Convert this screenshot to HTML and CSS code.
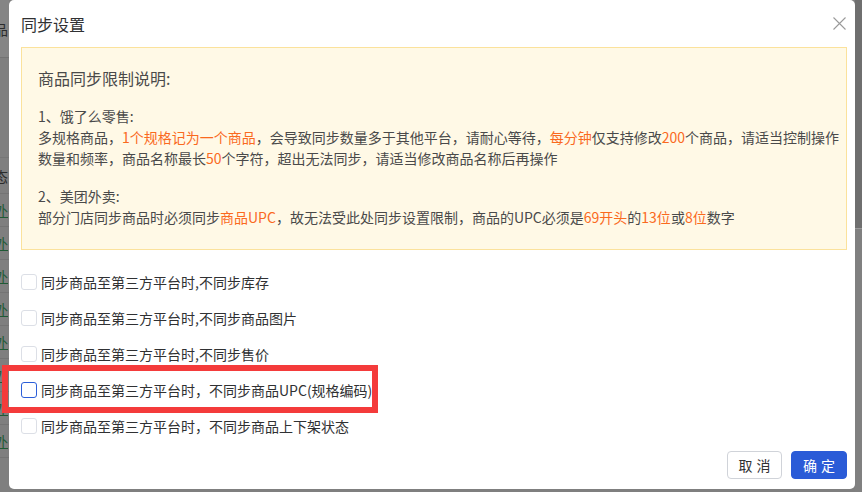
FILE: index.html
```html
<!DOCTYPE html>
<html lang="zh-CN">
<head>
<meta charset="utf-8">
<title>同步设置</title>
<link rel="stylesheet" href="styles.css">
</head>
<body>
<div class="page">
  <aside class="bg-strip bg-left">
    <div class="bg-row bg-head">品</div>
    <div class="bg-row bg-band"></div>
    <div class="bg-row bg-state">态</div>
    <div class="bg-row bg-link"><span>外</span></div>
    <div class="bg-row bg-link"><span>外</span></div>
    <div class="bg-row bg-link"><span>外</span></div>
    <div class="bg-row bg-link"><span>外</span></div>
    <div class="bg-row bg-link"><span>外</span></div>
    <div class="bg-row bg-link"><span>外</span></div>
    <div class="bg-row bg-link"><span>外</span></div>
    <div class="bg-row bg-link"><span>外</span></div>
  </aside>

  <section class="modal">
    <header class="modal-header">
      <h1 class="modal-title">同步设置</h1>
      <span class="modal-close" aria-label="关闭">
        <svg width="13" height="13" viewBox="0 0 13 13"><path d="M0.5 0.5 L12.5 12.5 M12.5 0.5 L0.5 12.5" stroke="#9a9a9a" stroke-width="1.1" fill="none"/></svg>
      </span>
    </header>

    <div class="notice">
      <div class="notice-title">商品同步限制说明:</div>
      <div class="notice-section">
        <div>1、饿了么零售:</div>
        <div>多规格商品，<em>1个规格记为一个商品</em>，会导致同步数量多于其他平台，请耐心等待，<em>每分钟</em>仅支持修改<em>200</em>个商品，请适当控制操作数量和频率，商品名称最长<em>50</em>个字符，超出无法同步，请适当修改商品名称后再操作</div>
      </div>
      <div class="notice-section second">
        <div>2、美团外卖:</div>
        <div>部分门店同步商品时必须同步<em>商品UPC</em>，故无法受此处同步设置限制，商品的UPC必须是<em>69开头</em>的<em>13位</em>或<em>8位</em>数字</div>
      </div>
    </div>

    <ul class="options">
      <li class="option"><span class="checkbox"></span><span>同步商品至第三方平台时,不同步库存</span></li>
      <li class="option"><span class="checkbox"></span><span>同步商品至第三方平台时,不同步商品图片</span></li>
      <li class="option"><span class="checkbox"></span><span>同步商品至第三方平台时,不同步售价</span></li>
      <li class="option"><span class="checkbox focused"></span><span>同步商品至第三方平台时，不同步商品UPC(规格编码)</span></li>
      <li class="option"><span class="checkbox"></span><span>同步商品至第三方平台时，不同步商品上下架状态</span></li>
    </ul>

    <footer class="modal-footer">
      <button class="btn btn-cancel">取消</button>
      <button class="btn btn-primary">确定</button>
    </footer>
  </section>

  <aside class="bg-strip bg-right">
    <div class="bg-right-top"></div>
    <div class="bg-right-line"></div>
  </aside>

  <div class="annotation"></div>
</div>
</body>
</html>
```

FILE: styles.css
```css
* { box-sizing: border-box; }
html, body { margin: 0; padding: 0; }
body {
  font-family: "Noto Sans CJK SC", "Noto Sans", sans-serif;
  background: #7f7f7f;
}
.page {
  position: relative;
  display: flex;
  width: 862px;
  height: 492px;
  overflow: hidden;
  background: #7f7f7f;
}

/* dimmed page behind the dialog */
.bg-strip { flex: none; overflow: hidden; }
.bg-left { width: 9px; display: flex; flex-direction: column; }
.bg-row {
  font-size: 14px;
  line-height: 32px;
  height: 32px;
  white-space: nowrap;
  margin-left: -6px;
  color: #2b2b2b;
  border-bottom: 1px solid #747474;
}
.bg-head { height: 58px; line-height: 58px; background: #858585; border-bottom: 1px solid #737373; }
.bg-band { height: 100px; border-bottom: 1px solid #767676; }
.bg-state { height: 36px; line-height: 36px; }
.bg-link { height: 33px; line-height: 33px; }
.bg-link span { color: #1f5a35; text-decoration: underline; }

.bg-right { flex: 1; display: flex; flex-direction: column; background: #808080; }
.bg-right-top { height: 228px; background: #6f6f6f; }
.bg-right-line { height: 1px; background: #9a9a9a; }

/* dialog */
.modal {
  flex: none;
  width: 846px;
  height: 489px;
  background: #fff;
  border-radius: 5px;
  padding: 12px 8px 0 12px;
  display: flex;
  flex-direction: column;
}
.modal-header {
  display: flex;
  justify-content: space-between;
  align-items: center;
  height: 24px;
}
.modal-title {
  margin: 0;
  font-size: 16px;
  font-weight: normal;
  line-height: 24px;
  color: #303133;
}
.modal-close { display: flex; width: 13px; height: 13px; margin-right: 1px; margin-top: -1px; }

.notice {
  margin-top: 11px;
  background: #fff9e6;
  border: 1px solid #fbe29c;
  padding: 18px 4px 21px 16px;
  color: #4a4a4a;
  font-size: 14px;
  line-height: 21px;
}
.notice-title {
  font-size: 16px;
  line-height: 24px;
}
.notice-section { margin-top: 16px; }
.notice-section.second { margin-top: 17px; }
.notice em { font-style: normal; color: #fa6a1e; }

.options {
  list-style: none;
  margin: 14px 0 0;
  padding: 0;
}
.option {
  display: flex;
  align-items: center;
  height: 36px;
  font-size: 14px;
  color: #303133;
}
.checkbox {
  width: 16px;
  height: 16px;
  border: 1px solid #dcdfe6;
  border-radius: 3px;
  margin-right: 4px;
  background: #fff;
  flex: none;
}
.checkbox.focused { border-color: #2c5fd9; }

.modal-footer {
  margin-top: 7px;
  display: flex;
  justify-content: flex-end;
  gap: 9px;
}
.btn {
  height: 28px;
  font-family: inherit;
  font-size: 14px;
  letter-spacing: 4px;
  padding: 0 0 0 4px;
  border-radius: 4px;
  cursor: pointer;
}
.btn-cancel {
  width: 55px;
  background: #fff;
  color: #303133;
  border: 1px solid #d0d3d9;
}
.btn-primary {
  width: 56px;
  background: #2a5bd7;
  color: #fff;
  border: 1px solid #2a5bd7;
}

/* red highlight annotation over the screenshot */
.annotation {
  position: absolute;
  left: 2px;
  top: 365px;
  width: 376px;
  height: 48px;
  border: 6px solid #f43b3b;
  pointer-events: none;
}
```
